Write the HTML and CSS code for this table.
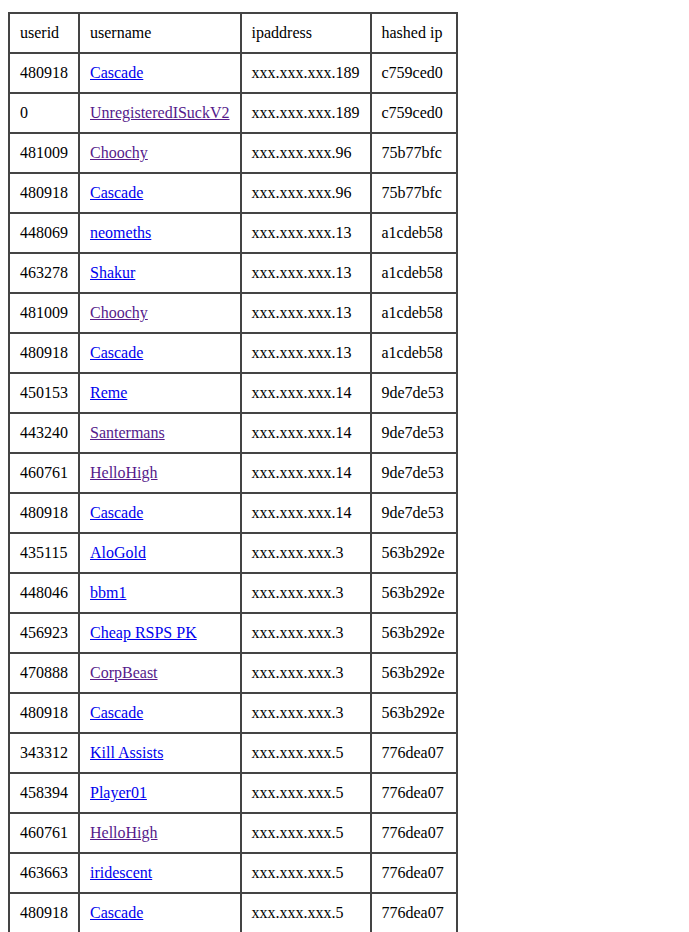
FILE: index.html
```html
<!DOCTYPE html>
<html>
<head>
<meta charset="utf-8">
<link rel="stylesheet" href="styles.css">
</head>
<body>
<table class="ip-table">
<tr><td>userid</td><td>username</td><td>ipaddress</td><td>hashed ip</td></tr>
<tr><td>480918</td><td><a class="link" href="#">Cascade</a></td><td>xxx.xxx.xxx.189</td><td>c759ced0</td></tr>
<tr><td>0</td><td><a class="link visited" href="#">UnregisteredISuckV2</a></td><td>xxx.xxx.xxx.189</td><td>c759ced0</td></tr>
<tr><td>481009</td><td><a class="link visited" href="#">Choochy</a></td><td>xxx.xxx.xxx.96</td><td>75b77bfc</td></tr>
<tr><td>480918</td><td><a class="link" href="#">Cascade</a></td><td>xxx.xxx.xxx.96</td><td>75b77bfc</td></tr>
<tr><td>448069</td><td><a class="link" href="#">neomeths</a></td><td>xxx.xxx.xxx.13</td><td>a1cdeb58</td></tr>
<tr><td>463278</td><td><a class="link" href="#">Shakur</a></td><td>xxx.xxx.xxx.13</td><td>a1cdeb58</td></tr>
<tr><td>481009</td><td><a class="link visited" href="#">Choochy</a></td><td>xxx.xxx.xxx.13</td><td>a1cdeb58</td></tr>
<tr><td>480918</td><td><a class="link" href="#">Cascade</a></td><td>xxx.xxx.xxx.13</td><td>a1cdeb58</td></tr>
<tr><td>450153</td><td><a class="link" href="#">Reme</a></td><td>xxx.xxx.xxx.14</td><td>9de7de53</td></tr>
<tr><td>443240</td><td><a class="link visited" href="#">Santermans</a></td><td>xxx.xxx.xxx.14</td><td>9de7de53</td></tr>
<tr><td>460761</td><td><a class="link visited" href="#">HelloHigh</a></td><td>xxx.xxx.xxx.14</td><td>9de7de53</td></tr>
<tr><td>480918</td><td><a class="link" href="#">Cascade</a></td><td>xxx.xxx.xxx.14</td><td>9de7de53</td></tr>
<tr><td>435115</td><td><a class="link" href="#">AloGold</a></td><td>xxx.xxx.xxx.3</td><td>563b292e</td></tr>
<tr><td>448046</td><td><a class="link" href="#">bbm1</a></td><td>xxx.xxx.xxx.3</td><td>563b292e</td></tr>
<tr><td>456923</td><td><a class="link" href="#">Cheap RSPS PK</a></td><td>xxx.xxx.xxx.3</td><td>563b292e</td></tr>
<tr><td>470888</td><td><a class="link visited" href="#">CorpBeast</a></td><td>xxx.xxx.xxx.3</td><td>563b292e</td></tr>
<tr><td>480918</td><td><a class="link" href="#">Cascade</a></td><td>xxx.xxx.xxx.3</td><td>563b292e</td></tr>
<tr><td>343312</td><td><a class="link" href="#">Kill Assists</a></td><td>xxx.xxx.xxx.5</td><td>776dea07</td></tr>
<tr><td>458394</td><td><a class="link" href="#">Player01</a></td><td>xxx.xxx.xxx.5</td><td>776dea07</td></tr>
<tr><td>460761</td><td><a class="link visited" href="#">HelloHigh</a></td><td>xxx.xxx.xxx.5</td><td>776dea07</td></tr>
<tr><td>463663</td><td><a class="link" href="#">iridescent</a></td><td>xxx.xxx.xxx.5</td><td>776dea07</td></tr>
<tr><td>480918</td><td><a class="link" href="#">Cascade</a></td><td>xxx.xxx.xxx.5</td><td>776dea07</td></tr>
</table>
</body>
</html>
```
FILE: styles.css
```css
html, body {
  margin: 0;
  background: #fff;
}
body {
  padding: 12px 8px;
  font-family: "Liberation Serif", "Times New Roman", serif;
  font-size: 16px;
  color: #000;
}
.ip-table {
  border-collapse: collapse;
  border: 2px solid #444;
}
.ip-table td {
  border: 2px solid #444;
  padding: 10px 10px;
  line-height: 18px;
  white-space: nowrap;
  text-align: left;
}
.ip-table td:last-child {
  padding-right: 11px;
}
.link {
  color: #0000ee;
  text-decoration: underline;
}
.link.visited {
  color: #551a8b;
}
```
